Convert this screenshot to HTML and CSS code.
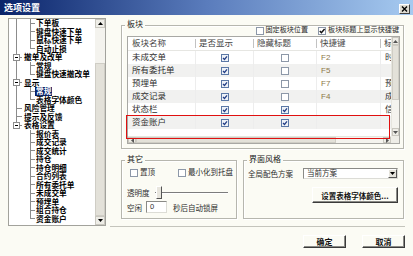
FILE: index.html
```html
<!DOCTYPE html>
<html>
<head>
<meta charset="utf-8">
<link rel="stylesheet" href="styles.css">
</head>
<body>
<div class="win">
  <div class="titlebar">
    <span class="title">选项设置</span>
    <span class="close"><svg width="7" height="6" viewBox="0 0 7 6"><path d="M1 0.5l5 5M6 0.5l-5 5" stroke="#000" stroke-width="1.4"/></svg></span>
  </div>

  <div class="main">
    <div class="tree">
      <div class="tree-body">
        <div class="tr"><i class="g gA v"></i><i class="g gB vh"></i><span class="t">下单板</span></div>
        <div class="tr"><i class="g gA v"></i><i class="g gB vh"></i><span class="t">键盘快速下单</span></div>
        <div class="tr"><i class="g gA v"></i><i class="g gB vh"></i><span class="t">鼠标快速下单</span></div>
        <div class="tr"><i class="g gA v"></i><i class="g gB uh"></i><span class="t">自动止损</span></div>
        <div class="tr"><i class="g gA vh"><b class="exp"></b></i><span class="t">撤单及改单</span></div>
        <div class="tr"><i class="g gA v"></i><i class="g gB vh"></i><span class="t">常规</span></div>
        <div class="tr"><i class="g gA v"></i><i class="g gB uh"></i><span class="t">键盘快速撤改单</span></div>
        <div class="tr"><i class="g gA vh"><b class="exp"></b></i><span class="t">显示</span></div>
        <div class="tr"><i class="g gA v"></i><i class="g gB vh"></i><span class="t sel">常规</span></div>
        <div class="tr"><i class="g gA v"></i><i class="g gB uh"></i><span class="t">表格字体颜色</span></div>
        <div class="tr"><i class="g gA vh"></i><span class="t">风险管理</span></div>
        <div class="tr"><i class="g gA vh"></i><span class="t">提示及反馈</span></div>
        <div class="tr"><i class="g gA uh"><b class="exp"></b></i><span class="t">表格设置</span></div>
        <div class="tr"><i class="g gA"></i><i class="g gB vh"></i><span class="t">报价表</span></div>
        <div class="tr"><i class="g gA"></i><i class="g gB vh"></i><span class="t">成交记录</span></div>
        <div class="tr"><i class="g gA"></i><i class="g gB vh"></i><span class="t">成交统计</span></div>
        <div class="tr"><i class="g gA"></i><i class="g gB vh"></i><span class="t">持仓</span></div>
        <div class="tr"><i class="g gA"></i><i class="g gB vh"></i><span class="t">持仓明细</span></div>
        <div class="tr"><i class="g gA"></i><i class="g gB vh"></i><span class="t">合约列表</span></div>
        <div class="tr"><i class="g gA"></i><i class="g gB vh"></i><span class="t">所有委托单</span></div>
        <div class="tr"><i class="g gA"></i><i class="g gB vh"></i><span class="t">未成交单</span></div>
        <div class="tr"><i class="g gA"></i><i class="g gB vh"></i><span class="t">预埋单</span></div>
        <div class="tr"><i class="g gA"></i><i class="g gB vh"></i><span class="t">组合持仓</span></div>
        <div class="tr"><i class="g gA"></i><i class="g gB uh"></i><span class="t">资金账户</span></div>
      </div>
      <div class="vscroll tree-sb">
        <span class="sarrow"><svg width="5" height="3" viewBox="0 0 5 3"><path d="M0 3h5L2.5 0z"/></svg></span>
        <span class="strack tree-track"></span>
        <span class="sthumb"></span>
        <span class="sarrow"><svg width="5" height="3" viewBox="0 0 5 3"><path d="M0 0h5L2.5 3z"/></svg></span>
      </div>
    </div>

    <div class="right">
      <div class="group g-blocks">
        <div class="gtitle">板块</div>
        <div class="gchecks">
          <span class="chk"><svg width="8" height="8" viewBox="0 0 8 8"><rect x=".5" y=".5" width="7" height="7" fill="#fff" stroke="#8d98a8"/></svg>固定板块位置</span>
          <span class="chk"><svg width="8" height="8" viewBox="0 0 8 8"><rect x=".5" y=".5" width="7" height="7" fill="#fff" stroke="#8d98a8"/><path d="M1.8 4l1.6 1.7L6.6 2" fill="none" stroke="#111" stroke-width="1.5"/></svg>板块标题上显示快捷键</span>
        </div>

        <div class="listview">
          <div class="lv-content">
            <div class="lv-row lv-head"><span>板块名称</span><span>是否显示</span><span>隐藏标题</span><span>快捷键</span><span>标题名称</span></div>
            <div class="lv-row">
              <span>未成交单</span>
              <span class="cc"><svg width="8" height="8" viewBox="0 0 8 8"><rect x=".5" y=".5" width="7" height="7" fill="#eef2f8" stroke="#5b78a6"/><path d="M2 4l1.5 1.5L6 2.4" fill="none" stroke="#243f86" stroke-width="1.3"/></svg></span>
              <span class="cc"><svg width="8" height="8" viewBox="0 0 8 8"><rect x=".5" y=".5" width="7" height="7" fill="#fff" stroke="#8d98a8"/></svg></span>
              <span class="fk">F2</span><span>时间</span>
            </div>
            <div class="lv-row alt">
              <span>所有委托单</span>
              <span class="cc"><svg width="8" height="8" viewBox="0 0 8 8"><rect x=".5" y=".5" width="7" height="7" fill="#eef2f8" stroke="#5b78a6"/><path d="M2 4l1.5 1.5L6 2.4" fill="none" stroke="#243f86" stroke-width="1.3"/></svg></span>
              <span class="cc"><svg width="8" height="8" viewBox="0 0 8 8"><rect x=".5" y=".5" width="7" height="7" fill="#fff" stroke="#8d98a8"/></svg></span>
              <span class="fk">F5</span><span></span>
            </div>
            <div class="lv-row">
              <span>预埋单</span>
              <span class="cc"><svg width="8" height="8" viewBox="0 0 8 8"><rect x=".5" y=".5" width="7" height="7" fill="#eef2f8" stroke="#5b78a6"/><path d="M2 4l1.5 1.5L6 2.4" fill="none" stroke="#243f86" stroke-width="1.3"/></svg></span>
              <span class="cc"><svg width="8" height="8" viewBox="0 0 8 8"><rect x=".5" y=".5" width="7" height="7" fill="#fff" stroke="#8d98a8"/></svg></span>
              <span class="fk">F7</span><span>预埋</span>
            </div>
            <div class="lv-row alt">
              <span>成交记录</span>
              <span class="cc"><svg width="8" height="8" viewBox="0 0 8 8"><rect x=".5" y=".5" width="7" height="7" fill="#eef2f8" stroke="#5b78a6"/><path d="M2 4l1.5 1.5L6 2.4" fill="none" stroke="#243f86" stroke-width="1.3"/></svg></span>
              <span class="cc"><svg width="8" height="8" viewBox="0 0 8 8"><rect x=".5" y=".5" width="7" height="7" fill="#fff" stroke="#8d98a8"/></svg></span>
              <span class="fk">F4</span><span>成交</span>
            </div>
            <div class="lv-row">
              <span>状态栏</span>
              <span class="cc"><svg width="8" height="8" viewBox="0 0 8 8"><rect x=".5" y=".5" width="7" height="7" fill="#eef2f8" stroke="#5b78a6"/><path d="M2 4l1.5 1.5L6 2.4" fill="none" stroke="#243f86" stroke-width="1.3"/></svg></span>
              <span class="cc"><svg width="8" height="8" viewBox="0 0 8 8"><rect x=".5" y=".5" width="7" height="7" fill="#eef2f8" stroke="#5b78a6"/><path d="M2 4l1.5 1.5L6 2.4" fill="none" stroke="#243f86" stroke-width="1.3"/></svg></span>
              <span class="fk"></span><span>信息</span>
            </div>
            <div class="lv-row alt">
              <span>资金账户</span>
              <span class="cc"><svg width="8" height="8" viewBox="0 0 8 8"><rect x=".5" y=".5" width="7" height="7" fill="#eef2f8" stroke="#5b78a6"/><path d="M2 4l1.5 1.5L6 2.4" fill="none" stroke="#243f86" stroke-width="1.3"/></svg></span>
              <span class="cc"><svg width="8" height="8" viewBox="0 0 8 8"><rect x=".5" y=".5" width="7" height="7" fill="#eef2f8" stroke="#5b78a6"/><path d="M2 4l1.5 1.5L6 2.4" fill="none" stroke="#243f86" stroke-width="1.3"/></svg></span>
              <span class="fk"></span><span></span>
            </div>
          </div>
          <div class="vscroll lv-vs">
            <span class="sarrow"><svg width="5" height="3" viewBox="0 0 5 3"><path d="M0 3h5L2.5 0z" fill="#555"/></svg></span>
            <span class="sthumb lv-thumb"></span>
            <span class="strack"></span>
            <span class="sarrow"><svg width="5" height="3" viewBox="0 0 5 3"><path d="M0 0h5L2.5 3z" fill="#555"/></svg></span>
          </div>
          <div class="hscroll">
            <span class="sarrow"><svg width="3" height="5" viewBox="0 0 3 5"><path d="M3 0v5L0 2.5z" fill="#555"/></svg></span>
            <span class="sthumb h-thumb"></span>
            <span class="strack"></span>
            <span class="sarrow"><svg width="3" height="5" viewBox="0 0 3 5"><path d="M0 0v5L3 2.5z" fill="#555"/></svg></span>
          </div>
          <div class="corner"></div>
          <div class="mark"></div>
        </div>
      </div>

      <div class="lower">
        <div class="group g-other">
          <div class="gtitle">其它</div>
          <div class="orow orow1">
            <span class="chk"><svg width="8" height="8" viewBox="0 0 8 8"><rect x=".5" y=".5" width="7" height="7" fill="#fff" stroke="#8d98a8"/></svg>置顶</span>
            <span class="chk chk-tray"><svg width="8" height="8" viewBox="0 0 8 8"><rect x=".5" y=".5" width="7" height="7" fill="#fff" stroke="#8d98a8"/></svg>最小化到托盘</span>
          </div>
          <div class="orow orow2">
            <span>透明度</span>
            <div class="slider"><span class="sl-thumb"></span></div>
          </div>
          <div class="orow orow3">
            <span>空闲</span>
            <span class="input">0</span>
            <span class="lock">秒后自动锁屏</span>
          </div>
        </div>

        <div class="group g-style">
          <div class="gtitle">界面风格</div>
          <div class="srow">
            <span>全局配色方案</span>
            <span class="select"><span class="sel-text">当前方案</span><span class="dd"><svg width="5" height="3" viewBox="0 0 5 3"><path d="M0 0h5L2.5 3z"/></svg></span></span>
          </div>
          <div class="srow2">
            <button class="btn btn-wide">设置表格字体颜色...</button>
          </div>
        </div>
      </div>
    </div>
  </div>

  <div class="footer">
    <button class="btn">确定</button>
    <button class="btn">取消</button>
  </div>
</div>
</body>
</html>
```

FILE: styles.css
```css
* { box-sizing: border-box; }

body {
  margin: 0;
  width: 413px;
  height: 256px;
  overflow: hidden;
  background: #fbfbf4;
  font-family: "Liberation Sans", "Noto Sans CJK SC", sans-serif;
  color: #2a2a2a;
}

/* ---------- title bar ---------- */
.titlebar {
  height: 15px;
  background: linear-gradient(90deg, #0a246a 0%, #5a7cbc 50%, #a6caf0 100%);
  display: flex;
  align-items: center;
  justify-content: space-between;
  padding: 0 3px 0 4px;
}
.title {
  color: #fff;
  font-weight: bold;
  font-size: 9px;
  line-height: 15px;
  font-family: "Noto Sans CJK SC", sans-serif;
}
.close {
  width: 11px;
  height: 10px;
  margin-top: 2px;
  background: #dedbd2;
  border: 1px solid;
  border-color: #fff #404040 #404040 #fff;
  display: flex;
  align-items: center;
  justify-content: center;
}
.close svg { display: block; }

/* ---------- main ---------- */
.main {
  display: flex;
  gap: 15px;
  height: 211px;
  padding: 3px 9px 0 8px;
}

/* ---------- tree ---------- */
.tree {
  width: 98px;
  height: 208px;
  flex: none;
  border: 1px solid #a2a29c;
  background: #fff;
  display: grid;
  grid-template-columns: 1fr 10px;
}
.tree-body {
  overflow: hidden;
  font-family: "Noto Sans CJK SC", sans-serif;
  font-weight: bold;
  font-size: 7.7px;
  color: #000;
}
.tr {
  display: flex;
  height: 8.5px;
  line-height: 8.5px;
  white-space: nowrap;
}
.g {
  display: block;
  flex: none;
  height: 100%;
  background-repeat: no-repeat;
}
.gA { width: 14px; }
.gB { width: 12px; }
.v {
  background-image: linear-gradient(#8c8c8c, #8c8c8c);
  background-position: 7px 0;
  background-size: 1px 100%;
}
.vh {
  background-image: linear-gradient(#8c8c8c, #8c8c8c), linear-gradient(#8c8c8c, #8c8c8c);
  background-position: 7px 0, 7px 50%;
  background-size: 1px 100%, 6px 1px;
}
.uh {
  background-image: linear-gradient(#8c8c8c, #8c8c8c), linear-gradient(#8c8c8c, #8c8c8c);
  background-position: 7px 0, 7px 50%;
  background-size: 1px 50%, 6px 1px;
}
.exp {
  display: block;
  width: 7px;
  height: 7px;
  margin: 0.75px 0 0 4px;
  border: 1px solid #8c8c8c;
  background: linear-gradient(#000, #000) center / 3px 1px no-repeat, #fff;
}
.t {
  padding: 0 1px;
  height: 8.5px;
}
.sel {
  background: #0a246a;
  color: #fff;
}

/* ---------- scrollbars ---------- */
.vscroll {
  display: flex;
  flex-direction: column;
  background: #f4f3ee;
}
.sarrow {
  flex: none;
  display: flex;
  align-items: center;
  justify-content: center;
  background: #eeede7;
  border: 1px solid #c9c7bf;
}
.sarrow svg { display: block; }
.tree-sb .sarrow { height: 9px; }
.strack { flex: 1; }
.tree-track { flex: none; height: 35px; }
.sthumb {
  background: #e3e1d9;
  border: 1px solid #cfcdc5;
}
.tree-sb .sthumb { flex: 1; }

/* ---------- groups ---------- */
.right {
  width: 283px;
  flex: none;
  display: flex;
  flex-direction: column;
}
.group {
  border: 1px solid #b6b6ae;
  box-shadow: inset 1px 1px #fff, 1px 1px #fff;
}
.gtitle {
  width: max-content;
  height: 10px;
  line-height: 10px;
  margin: -6px 0 0 3px;
  padding: 0 2px;
  font-size: 8px;
  background: #fbfbf4;
  color: #222;
}
.g-blocks {
  margin-top: 7px;
  padding-bottom: 4px;
}
.gchecks {
  display: flex;
  justify-content: flex-end;
  align-items: center;
  gap: 10px;
  height: 9px;
  margin-top: -4px;
  padding-right: 4px;
  font-size: 7.1px;
}
.chk {
  display: inline-flex;
  align-items: center;
  gap: 2px;
  white-space: nowrap;
  line-height: 9px;
}
.chk svg { display: block; flex: none; }

/* ---------- list view ---------- */
.listview {
  position: relative;
  height: 108px;
  margin: 1px 3px 0 5px;
  border: 1px solid #a8a8a4;
  background: #fff;
  display: grid;
  grid-template-columns: 1fr 8px;
  grid-template-rows: 1fr 7px;
}
.lv-content {
  overflow: hidden;
  font-size: 8.5px;
  color: #2e2e2e;
}
.lv-row {
  display: grid;
  grid-template-columns: 67px 58px 63px 64px 40px;
  height: 13px;
  align-items: center;
  white-space: nowrap;
}
.lv-row > span {
  height: 100%;
  line-height: 13px;
  padding-left: 4px;
  overflow: hidden;
  border-left: 1px solid #ededed;
}
.lv-row > span:first-child { border-left: 0; }
.lv-head {
  height: 14px;
  border-bottom: 1px solid #e6e6e2;
  color: #444;
}
.lv-head > span {
  line-height: 13px;
  border-left: 0;
  background: linear-gradient(#c2c2c2, #c2c2c2) 0 50% / 1px 9px no-repeat;
}
.lv-head > span:first-child { background: none; }
.alt { background: #f1f1f0; }
.lv-row > .cc {
  display: flex;
  align-items: center;
  justify-content: center;
  padding-left: 0;
}
.fk {
  color: #8c7848;
  font-size: 8px;
}
.lv-vs {
  grid-column: 2;
  grid-row: 1;
  border-left: 1px solid #e6e5de;
}
.lv-vs .sarrow { height: 8px; }
.lv-thumb { height: 55px; flex: none; }
.hscroll {
  grid-column: 1;
  grid-row: 2;
  display: flex;
  background: #f4f3ee;
  border-top: 1px solid #e6e5de;
}
.hscroll .sarrow { width: 8px; }
.h-thumb { width: 200px; flex: none; }
.corner {
  grid-column: 2;
  grid-row: 2;
  background: #eeede7;
}
.mark {
  position: absolute;
  left: -2px;
  top: 78px;
  width: 264px;
  height: 24px;
  border: 1.5px solid #e01010;
}

/* ---------- lower groups ---------- */
.lower {
  display: flex;
  gap: 6px;
  height: 59px;
  margin-top: 11px;
}
.g-other { width: 116px; flex: none; }
.g-style { flex: 1; }
.orow {
  display: flex;
  align-items: center;
  font-size: 7.5px;
  color: #2e2e2e;
  white-space: nowrap;
}
.orow1 {
  height: 9px;
  margin-top: 3px;
  padding-left: 8px;
}
.chk-tray { margin-left: 23px; }
.orow2 {
  height: 13px;
  margin-top: 9px;
  padding-left: 5px;
}
.slider {
  width: 73px;
  height: 13px;
  margin-left: 5px;
  display: flex;
  padding-left: 1px;
  background:
    linear-gradient(#7c7c7c, #7c7c7c) 0 6px / 100% 1px no-repeat,
    linear-gradient(#fff, #fff) 0 7px / 100% 1px no-repeat;
}
.sl-thumb {
  width: 6px;
  height: 13px;
  background: #e8e6de;
  border: 1px solid;
  border-color: #fff #555 #555 #fff;
}
.orow3 {
  height: 12px;
  margin-top: 2px;
  padding-left: 5px;
}
.input {
  width: 21px;
  height: 12px;
  margin-left: 4px;
  padding-left: 3px;
  line-height: 10px;
  font-size: 7.5px;
  background: #fff;
  border: 1px solid;
  border-color: #8a8a86 #dcdcd6 #dcdcd6 #8a8a86;
}
.lock { margin-left: 6px; }

.srow {
  display: flex;
  align-items: center;
  height: 11px;
  margin-top: 3px;
  padding: 0 5px 0 4px;
  font-size: 7.5px;
  color: #2e2e2e;
  white-space: nowrap;
}
.select {
  margin-left: auto;
  width: 95px;
  height: 11px;
  display: flex;
  align-items: center;
  background: #fff;
  border: 1px solid;
  border-color: #8a8a86 #dcdcd6 #dcdcd6 #8a8a86;
}
.sel-text { flex: 1; padding-left: 3px; line-height: 9px; }
.dd {
  width: 9px;
  height: 9px;
  display: flex;
  align-items: center;
  justify-content: center;
  background: #e6e4dc;
  border: 1px solid;
  border-color: #fff #555 #555 #fff;
}
.dd svg { display: block; }
.srow2 {
  display: flex;
  justify-content: flex-end;
  margin-top: 8px;
  padding-right: 5px;
}

/* ---------- buttons ---------- */
.btn {
  width: 43px;
  height: 13px;
  padding: 0;
  margin: 0;
  font-family: "Noto Sans CJK SC", sans-serif;
  font-size: 8px;
  font-weight: bold;
  line-height: 10px;
  color: #111;
  background: #fbfbf4;
  border: 1px solid;
  border-color: #fff #3a3a3a #3a3a3a #fff;
  box-shadow: inset -1px -1px #8a8a86;
}
.btn-wide {
  width: 86px;
  height: 16px;
  font-size: 7.5px;
  line-height: 13px;
}

/* ---------- footer ---------- */
.footer {
  display: flex;
  justify-content: flex-end;
  gap: 16px;
  margin: 0 8px 0 110px;
  padding-top: 8px;
  border-top: 1px solid #c4c4bc;
}
```
